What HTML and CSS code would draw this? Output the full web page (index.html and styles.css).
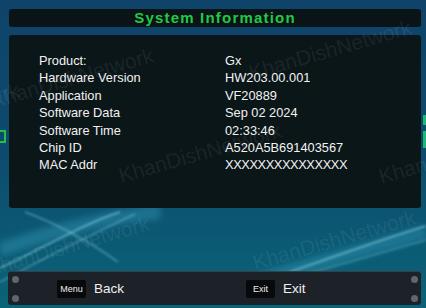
FILE: index.html
```html
<!DOCTYPE html>
<html>
<head>
<meta charset="utf-8">
<link rel="stylesheet" href="styles.css">
</head>
<body>
<div class="screen">
  <svg class="bg" width="426" height="308" viewBox="0 0 426 308">
    <defs>
      <linearGradient id="g" x1="0" y1="0" x2="0" y2="1">
        <stop offset="0" stop-color="#0f436a"/>
        <stop offset="0.5" stop-color="#0d4b6e"/>
        <stop offset="0.8" stop-color="#0b5a74"/>
        <stop offset="1" stop-color="#0a6478"/>
      </linearGradient>
      <filter id="blur" x="-20%" y="-20%" width="140%" height="140%">
        <feGaussianBlur stdDeviation="3"/>
      </filter>
      <filter id="soft" x="-20%" y="-20%" width="140%" height="140%">
        <feGaussianBlur stdDeviation="0.8"/>
      </filter>
    </defs>
    <rect width="426" height="308" fill="url(#g)"/>
    <path d="M0 250 C50 232 100 218 160 212" stroke="#3fa8c8" stroke-opacity="0.35" stroke-width="14" fill="none" filter="url(#blur)"/>
    <path d="M260 280 C320 262 380 245 426 232" stroke="#3fa8c8" stroke-opacity="0.35" stroke-width="14" fill="none" filter="url(#blur)"/>
    <g filter="url(#soft)">
      <path d="M0 268 C40 250 80 225 120 212" stroke="#9fe4f4" stroke-opacity="0.45" stroke-width="2" fill="none"/>
      <path d="M0 282 C50 255 90 235 135 214" stroke="#9fe4f4" stroke-opacity="0.35" stroke-width="1.5" fill="none"/>
      <path d="M25 212 C60 225 90 242 118 262" stroke="#8fd8ec" stroke-opacity="0.35" stroke-width="2" fill="none"/>
      <path d="M290 272 C330 258 380 240 426 226" stroke="#9fe4f4" stroke-opacity="0.45" stroke-width="2" fill="none"/>
      <path d="M305 274 C350 262 390 250 426 240" stroke="#8fd8ec" stroke-opacity="0.3" stroke-width="1.5" fill="none"/>
    </g>
  </svg>

  <span class="mark-left"></span>
  <span class="mark-right a"></span>
  <span class="mark-right b"></span>

  <div class="title">System Information</div>

  <div class="panel">
    <div class="row"><span class="label">Product:</span><span class="value">Gx</span></div>
    <div class="row"><span class="label">Hardware Version</span><span class="value">HW203.00.001</span></div>
    <div class="row"><span class="label">Application</span><span class="value">VF20889</span></div>
    <div class="row"><span class="label">Software Data</span><span class="value">Sep 02 2024</span></div>
    <div class="row"><span class="label">Software Time</span><span class="value">02:33:46</span></div>
    <div class="row"><span class="label">Chip ID</span><span class="value">A520A5B691403567</span></div>
    <div class="row"><span class="label">MAC Addr</span><span class="value mac">XXXXXXXXXXXXXXX</span></div>
  </div>

  <div class="footer">
    <div class="dots"><span></span><span></span></div>
    <div class="hint first"><span class="key">Menu</span><span class="action">Back</span></div>
    <div class="hint"><span class="key">Exit</span><span class="action">Exit</span></div>
    <div class="dots right"><span></span><span></span></div>
  </div>

  <div class="watermarks">
    <span class="wm w1">KhanDishNetwork</span>
    <span class="wm w2">KhanDishNetwork</span>
    <span class="wm w3">KhanDishNetwork</span>
    <span class="wm w4">KhanDishNetwork</span>
    <span class="wm w5">KhanDishNetwork</span>
    <span class="wm w6">KhanDishNetwork</span>
    <span class="wm w7">KhanDishNetwork</span>
  </div>
</div>
</body>
</html>
```
FILE: styles.css
```css
* { box-sizing: border-box; }
html, body { margin: 0; padding: 0; }
body {
  width: 426px;
  height: 308px;
  overflow: hidden;
  background: #0f436a;
  font-family: "Liberation Sans", Arial, sans-serif;
}
.screen {
  position: relative;
  width: 426px;
  height: 308px;
  overflow: hidden;
  display: flex;
  flex-direction: column;
  padding: 9px 5px 0 9px;
}
.bg {
  position: absolute;
  left: 0;
  top: 0;
  z-index: 0;
}
.title, .panel, .footer { position: relative; z-index: 1; }

.mark-left {
  position: absolute;
  left: -2px;
  top: 130px;
  width: 8px;
  height: 13px;
  border: 2px solid #22c048;
  z-index: 1;
}
.mark-right {
  position: absolute;
  left: 423px;
  width: 4px;
  background: #1fb870;
  z-index: 1;
}
.mark-right.a { top: 115px; height: 10px; }
.mark-right.b { top: 131px; height: 17px; }

.title {
  height: 18px;
  background: #0a1416;
  border-radius: 3px;
  color: #22c848;
  font-weight: bold;
  font-size: 15px;
  letter-spacing: 1.2px;
  line-height: 18px;
  text-align: center;
}

.panel {
  margin-top: 8px;
  height: 173px;
  background: #0b1618;
  border-radius: 3px;
  padding: 17px 0 0 30px;
  display: flex;
  flex-direction: column;
}
.row {
  display: flex;
  height: 17.4px;
  line-height: 17.4px;
  color: #f2f2f2;
  font-size: 12.8px;
}
.label { width: 186px; }
.mac { letter-spacing: -0.4px; }

.footer {
  margin-top: 63px;
  margin-left: -1px;
  height: 34px;
  background: #1d2228;
  border-radius: 3px;
  border-top: 1px solid #3a4048;
  display: flex;
  align-items: center;
}
.dots {
  height: 100%;
  display: flex;
  flex-direction: column;
  justify-content: space-between;
  padding: 4px 0 3px;
  margin-left: 4px;
}
.dots span {
  width: 7px;
  height: 7px;
  border-radius: 50%;
  background: #5f666e;
}
.dots.right { margin-left: auto; margin-right: 3px; }
.hint {
  display: flex;
  align-items: center;
  gap: 8px;
}
.hint.first { width: 189px; margin-left: 38px; }
.key {
  height: 18px;
  width: 29px;
  background: #07090b;
  border-radius: 2px;
  color: #f0f0f0;
  font-size: 9px;
  line-height: 18px;
  text-align: center;
}
.action {
  color: #f0f0f0;
  font-size: 13.5px;
}

.watermarks {
  position: absolute;
  left: 0;
  top: 0;
  width: 426px;
  height: 308px;
  z-index: 2;
  pointer-events: none;
}
.wm {
  position: absolute;
  font-size: 21px;
  color: rgba(255, 255, 255, 0.08);
  transform: rotate(-16deg);
  transform-origin: left bottom;
  white-space: nowrap;
  line-height: 1;
}
.w1 { left: -6px; top: 90px; }
.w2 { left: 252px; top: 62px; }
.w3 { left: -140px; top: 125px; }
.w4 { left: 122px; top: 165px; }
.w5 { left: 382px; top: 166px; }
.w6 { left: -10px; top: 258px; }
.w7 { left: 256px; top: 252px; }
```
